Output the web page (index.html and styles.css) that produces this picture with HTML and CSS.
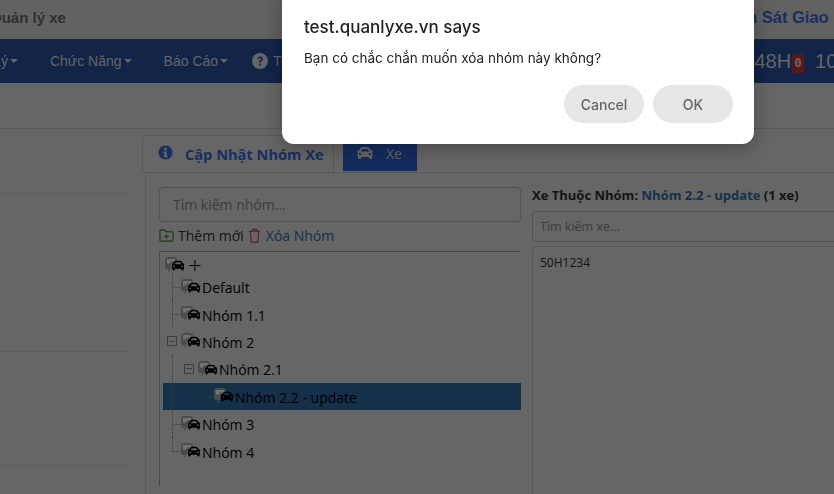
FILE: index.html
```html
<!DOCTYPE html>
<html lang="en">
<head>
    <meta charset="UTF-8">
    <title>Quản lý xe</title>
    <link rel="stylesheet" href="styles.css">
</head>
<body>
    <svg class="sprites" width="0" height="0">
        <symbol id="car" viewBox="0 0 512 512"><path d="M499.99 176h-59.87l-16.64-41.6C406.38 91.63 365.57 64 319.5 64h-127c-46.06 0-86.88 27.63-103.99 70.4L71.87 176H12.01C4.2 176-1.53 183.34.37 190.91l6 24C7.7 220.25 12.5 224 18.01 224h20.07C24.65 235.73 16 252.78 16 272v48c0 16.12 6.16 30.67 16 41.93V416c0 17.67 14.33 32 32 32h32c17.67 0 32-14.33 32-32v-32h256v32c0 17.67 14.33 32 32 32h32c17.67 0 32-14.33 32-32v-54.07c9.84-11.25 16-25.8 16-41.93v-48c0-19.22-8.65-36.27-22.07-48H494c5.51 0 10.31-3.75 11.64-9.09l6-24c1.89-7.57-3.84-14.91-11.65-14.91zm-352.06-17.83c7.29-18.22 24.94-30.17 44.57-30.17h127c19.63 0 37.28 11.95 44.57 30.17L384 208H128l19.93-49.83zM96 319.8c-19.2 0-32-12.76-32-31.9S76.8 256 96 256s48 28.71 48 47.85-28.8 15.95-48 15.95zm320 0c-19.2 0-48 3.19-48-15.95S396.8 256 416 256s32 12.76 32 31.9-12.8 31.9-32 31.9z"/></symbol>
        <symbol id="node" viewBox="0 0 20 16">
            <path fill="#4c4c4c" d="M3 0h6a3 3 0 0 1 3 3v3H6.500v6H5v2.500H3.500V12H2a2 2 0 0 1-2-2V3a3 3 0 0 1 3-3z"/>
            <path fill="#727272" d="M2 2h8v2.500H5.500V6.500H2z"/>
            <use href="#car" x="6.500" y="2" width="13" height="13"/>
        </symbol>
    </svg>

    <header class="top-bar">
        <div class="brand">Quản lý xe</div>
        <div class="top-link">Giám Sát Giao</div>
    </header>

    <nav class="main-nav">
        <a class="nav-item nav-first">Quản Lý<i class="caret"></i></a>
        <a class="nav-item">Chức Năng<i class="caret"></i></a>
        <a class="nav-item">Báo Cáo<i class="caret"></i></a>
        <a class="nav-item nav-help">
            <svg class="help-icon" viewBox="0 0 16 16"><circle cx="8" cy="8" r="8" fill="#666"/><path d="M5.4 6.1C5.5 4.5 6.6 3.5 8.2 3.5c1.6 0 2.7 1 2.7 2.300 0 1-.6 1.600-1.300 2.100-.6.4-.8.7-.8 1.300v.3H7.100v-.5c0-.9.4-1.500 1.100-2 .6-.4.9-.7.9-1.100 0-.5-.4-.8-1-.8s-1 .4-1.100 1z" fill="#122448"/><rect x="7.100" y="10.800" width="1.800" height="1.800" fill="#122448"/></svg>
            Trợ Giúp
        </a>
        <div class="nav-stats">48H<span class="stat-badge">0</span><span class="stat-next">10</span></div>
    </nav>

    <div class="sub-bar"></div>

    <main class="content">
        <aside class="side-col">
            <div class="side-row side-row-a"></div>
            <div class="side-row side-row-b"></div>
            <div class="side-row side-row-c"></div>
        </aside>

        <section class="editor">
            <div class="tabs">
                <a class="tab tab-active">
                    <svg class="tab-icon" viewBox="0 0 16 16"><circle cx="8" cy="8" r="7.500" fill="#183060"/><rect x="6.700" y="3" width="2.600" height="2.600" fill="#666"/><path d="M5.800 7h3.500v4.500h1.100V13H5.800v-1.500h1V8.500h-1z" fill="#666"/></svg>
                    Cập Nhật Nhóm Xe
                </a>
                <a class="tab tab-blue">
                    <svg class="tab-car"><use href="#car"/></svg>
                    Xe
                </a>
            </div>

            <div class="panel">
                <div class="group-col">
                    <input class="search search-group" placeholder="Tìm kiếm nhóm...">
                    <div class="tools">
                        <svg class="tool-icon" viewBox="0 0 16 16" fill="none" stroke="#193912" stroke-width="1.200"><path d="M1 3.500V13a1 1 0 0 0 1 1h12a1 1 0 0 0 1-1V5a1 1 0 0 0-1-1H7.500L6 2H2a1 1 0 0 0-1 1.500z"/><path d="M8 6.500v5M5.500 9h5"/></svg>
                        <span class="tool-add">Thêm mới</span>
                        <svg class="tool-icon" viewBox="0 0 16 16" fill="none" stroke="#572120" stroke-width="1.200"><path d="M2 3.500h12M6 3.500V1.500h4v2M3.500 3.500l1 11.500h7l1-11.500"/></svg>
                        <span class="tool-del">Xóa Nhóm</span>
                    </div>
                    <ul class="tree">
                        <li class="node node-root"><svg class="node-icon"><use href="#node"/></svg><span class="root-plus">+</span></li>
                        <li class="node"><i class="branch"></i><svg class="node-icon"><use href="#node"/></svg>Default</li>
                        <li class="node"><i class="branch"></i><svg class="node-icon"><use href="#node"/></svg>Nhóm 1.1</li>
                        <li class="node"><i class="toggle"></i><svg class="node-icon"><use href="#node"/></svg>Nhóm 2</li>
                        <li class="node"><i class="line"></i><i class="toggle"></i><svg class="node-icon"><use href="#node"/></svg>Nhóm 2.1</li>
                        <li class="node node-selected"><i class="line"></i><i class="spacer"></i><i class="branch branch-stub"></i><svg class="node-icon"><use href="#node"/></svg>Nhóm 2.2 - update</li>
                        <li class="node"><i class="branch"></i><svg class="node-icon"><use href="#node"/></svg>Nhóm 3</li>
                        <li class="node"><i class="branch branch-last"></i><svg class="node-icon"><use href="#node"/></svg>Nhóm 4</li>
                    </ul>
                </div>

                <div class="cars-col">
                    <div class="cars-title">Xe Thuộc Nhóm: <span class="cars-group">Nhóm 2.2 - update</span> (1 xe)</div>
                    <input class="search search-car" placeholder="Tìm kiếm xe...">
                    <div class="cars-list">50H1234</div>
                </div>
            </div>
        </section>
    </main>

    <div class="dialog">
        <div class="dialog-title">test.quanlyxe.vn says</div>
        <div class="dialog-text">Bạn có chắc chắn muốn xóa nhóm này không?</div>
        <div class="dialog-actions">
            <button class="dialog-btn">Cancel</button>
            <button class="dialog-btn">OK</button>
        </div>
    </div>
</body>
</html>
```

FILE: styles.css
```css
/* page colours as they look behind the open browser dialog */
:root {
    --page-bg: #666666;
    --line: #585858;
    --nav-bg: #122448;
    --nav-text: #666666;
    --tab-blue: #142c60;
    --title-blue: #183060;
    --link-blue: #143149;
    --placeholder: #3d3d3d;
    --dots: #3d3d3d;
    --text: #141414;
}

html, body {
    margin: 0;
    height: 100%;
    overflow: hidden;
}

body {
    font-family: "Liberation Sans", Arial, sans-serif;
    background-color: var(--page-bg);
    color: var(--text);
}

.sprites {
    position: absolute;
}

/* Top bar */
.top-bar {
    height: 39px;
    box-sizing: border-box;
    padding-bottom: 5px;
    display: flex;
    align-items: center;
    background-color: #626262;
    white-space: nowrap;
}

.brand {
    margin-left: -10px;
    font-size: 15px;
    font-weight: 700;
    color: #2f2f2f;
}

.top-link {
    margin-left: 650px;
    font-size: 16.5px;
    font-weight: 700;
    color: var(--title-blue);
    flex-shrink: 0;
}

/* Nav */
.main-nav {
    height: 44px;
    display: flex;
    align-items: center;
    background-color: var(--nav-bg);
    color: var(--nav-text);
    font-size: 14px;
    white-space: nowrap;
}

.nav-item {
    display: flex;
    align-items: center;
    flex-shrink: 0;
    margin-left: 32px;
}

.nav-first {
    margin-left: -45px;
}

.caret {
    width: 0;
    height: 0;
    margin-left: 2px;
    border-top: 4px solid var(--nav-text);
    border-left: 4px solid transparent;
    border-right: 4px solid transparent;
}

.nav-help {
    margin-left: 24px;
}

.help-icon {
    width: 16px;
    height: 16px;
    margin-right: 5px;
}

.nav-stats {
    display: flex;
    align-items: center;
    flex-shrink: 0;
    margin-left: 426px;
    font-size: 20px;
}

.stat-badge {
    display: inline-block;
    width: 12px;
    height: 19px;
    margin-left: 1px;
    background-color: #5c1715;
    border-radius: 2px;
    font-family: "DejaVu Sans Mono", monospace;
    font-size: 12px;
    font-weight: 700;
    line-height: 19px;
    text-align: center;
    position: relative;
    top: 2px;
}

.stat-next {
    margin-left: 11px;
}

.sub-bar {
    height: 46px;
    border-bottom: 1px solid #5b5b5b;
    box-sizing: border-box;
}

/* Content */
.content {
    display: flex;
    height: 365px;
}

.side-col {
    width: 129px;
    flex-shrink: 0;
    padding-top: 64px;
}

.side-row {
    border-bottom: 1px solid #5f5f5f;
}

.side-row-b {
    margin-top: 157px;
}

.side-row-c {
    margin-top: 113px;
}

.editor {
    margin-left: 13px;
    padding-top: 6px;
    flex-grow: 1;
    min-width: 0;
}

.tabs {
    display: flex;
    height: 37px;
}

.tab {
    display: flex;
    align-items: center;
    box-sizing: border-box;
    font-family: "Open Sans", sans-serif;
    font-size: 14px;
    white-space: nowrap;
}

.tab-active {
    width: 192px;
    height: 37px;
    padding-left: 15px;
    border: 1px solid var(--line);
    border-bottom: none;
    border-radius: 5px 5px 0 0;
    font-size: 14.6px;
    font-weight: 700;
    color: var(--title-blue);
}

.tab-icon {
    width: 15px;
    height: 15px;
    margin-right: 12px;
    margin-top: -3px;
}

.tab-blue {
    width: 74px;
    height: 36px;
    margin-left: 9px;
    padding-left: 14px;
    background-color: var(--tab-blue);
    color: var(--nav-text);
}

.tab-car {
    width: 16px;
    height: 16px;
    margin-right: 13px;
    fill: var(--nav-text);
}

.panel {
    display: flex;
    margin-left: 3px;
    height: 322px;
    border-left: 1px solid var(--line);
    border-top: 1px solid var(--line);
    box-sizing: border-box;
}

.group-col {
    width: 362px;
    margin-left: 13px;
    padding-top: 14px;
    flex-shrink: 0;
}

.search {
    display: block;
    box-sizing: border-box;
    width: 100%;
    border: 1px solid #525252;
    border-radius: 4px;
    outline: none;
    background: var(--page-bg);
    font-family: "Open Sans", sans-serif;
}

.search::placeholder {
    color: var(--placeholder);
}

.search-group {
    height: 35px;
    padding: 0 13px;
    font-size: 14px;
}

.tools {
    display: flex;
    align-items: center;
    height: 29px;
    box-sizing: border-box;
    padding-bottom: 2px;
    font-family: "Open Sans", sans-serif;
    font-size: 14px;
}

.tool-icon {
    width: 15px;
    height: 15px;
    margin-right: 4px;
}

.tool-add {
    color: var(--text);
    margin-right: 3px;
}

.tool-del {
    color: var(--link-blue);
}

.tree {
    list-style: none;
    margin: 0;
    padding: 3.5px 0 0 3px;
    height: 230px;
    border: 1px solid #444954;
    border-right: none;
    border-bottom: none;
    font-family: "Open Sans", sans-serif;
    font-size: 14px;
    color: #000;
}

.node {
    display: flex;
    align-items: center;
    box-sizing: border-box;
    height: 27.4px;
    padding: 2px 0 0 2px;
    white-space: nowrap;
}

.node-root {
    height: 17.5px;
}

.node-root .node-icon {
    margin-top: 0;
}

.root-plus {
    font-size: 24px;
    font-weight: 300;
    margin-left: 2px;
    line-height: 1;
}

.node-icon {
    width: 20px;
    height: 16px;
    margin-right: 1px;
    margin-top: -2px;
    flex-shrink: 0;
}

.branch, .line, .toggle, .spacer {
    display: block;
    flex-shrink: 0;
    box-sizing: border-box;
}

.branch {
    width: 16px;
    height: calc(100% + 2px);
    margin-top: -2px;
    position: relative;
}

.branch::before {
    content: "";
    position: absolute;
    left: 7px;
    top: 0;
    bottom: 0;
    border-left: 1px dotted var(--dots);
}

.branch::after {
    content: "";
    position: absolute;
    left: 7px;
    right: 0;
    top: 50%;
    border-top: 1px dotted var(--dots);
}

.branch-last::before {
    bottom: 50%;
}

.branch-stub::before {
    display: none;
}

.line {
    height: calc(100% + 2px);
    margin: -2px 0 0 7px;
    width: 10px;
    border-left: 1px dotted var(--dots);
}

.spacer {
    width: 16px;
}

.toggle {
    width: 10px;
    height: 10px;
    margin: -2px 4px 0 2px;
    border: 1px solid var(--dots);
    background: linear-gradient(var(--dots), var(--dots)) center / 6px 1px no-repeat;
}

.node-selected {
    background-color: #143149;
}

.cars-col {
    flex-grow: 1;
    min-width: 0;
    margin-left: 11px;
    padding-top: 15px;
}

.cars-title {
    font-family: "Open Sans", sans-serif;
    font-size: 13px;
    font-weight: 700;
    line-height: 14px;
    white-space: nowrap;
}

.cars-group {
    color: var(--link-blue);
}

.search-car {
    height: 31px;
    margin-top: 9px;
    width: 320px;
    padding: 0 7px;
    font-size: 12.5px;
}

.cars-list {
    margin-top: 4px;
    height: 260px;
    width: 320px;
    box-sizing: border-box;
    padding: 7px 7px;
    border: 1px solid var(--line);
    border-radius: 4px 0 0 0;
    font-family: "Open Sans", sans-serif;
    font-size: 12px;
}

/* Confirm dialog */
.dialog {
    position: fixed;
    left: 282px;
    top: -10px;
    width: 472px;
    height: 154px;
    box-sizing: border-box;
    padding: 26px 22px 0;
    background-color: #fff;
    border-radius: 12px;
    box-shadow: 0 4px 20px rgba(0, 0, 0, 0.3);
    font-family: Inter, "Liberation Sans", sans-serif;
    color: #222;
}

.dialog-title {
    font-size: 17px;
    font-weight: 500;
    line-height: 22px;
}

.dialog-text {
    margin-top: 11px;
    font-size: 13.5px;
    line-height: 18px;
}

.dialog-actions {
    display: flex;
    justify-content: flex-end;
    gap: 9px;
    margin-top: 18px;
    margin-right: -1px;
}

.dialog-btn {
    width: 80px;
    height: 38px;
    border: none;
    border-radius: 19px;
    background-color: #e6e6e6;
    color: #666;
    font-family: Inter, "Liberation Sans", sans-serif;
    font-size: 14px;
    font-weight: 500;
}
```
